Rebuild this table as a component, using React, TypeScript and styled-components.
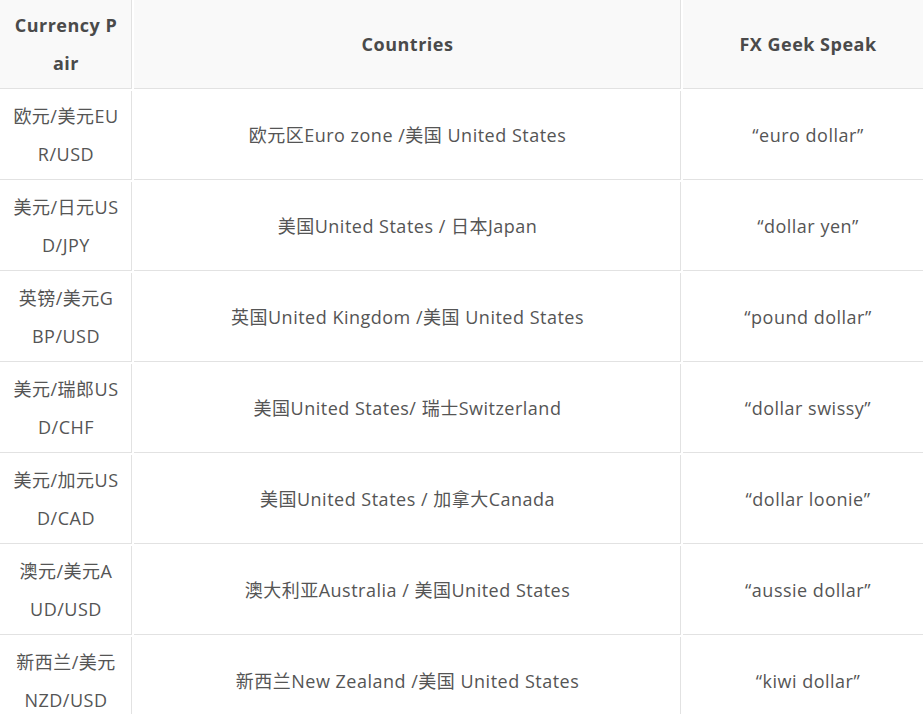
import styled, { createGlobalStyle } from "styled-components";

const rows = [
  { pair: "欧元/美元EUR/USD", countries: "欧元区Euro zone /美国 United States", speak: "“euro dollar”" },
  { pair: "美元/日元USD/JPY", countries: "美国United States / 日本Japan", speak: "“dollar yen”" },
  { pair: "英镑/美元GBP/USD", countries: "英国United Kingdom /美国 United States", speak: "“pound dollar”" },
  { pair: "美元/瑞郎USD/CHF", countries: "美国United States/ 瑞士Switzerland", speak: "“dollar swissy”" },
  { pair: "美元/加元USD/CAD", countries: "美国United States / 加拿大Canada", speak: "“dollar loonie”" },
  { pair: "澳元/美元AUD/USD", countries: "澳大利亚Australia / 美国United States", speak: "“aussie dollar”" },
  { pair: "新西兰/美元NZD/USD", countries: "新西兰New Zealand /美国 United States", speak: "“kiwi dollar”" },
];

function App() {
  return (
    <>
      <GlobalStyle />
      <Page>
        <Table>
          <colgroup>
            <Col $w={132} />
            <Col $w={547} />
            <Col $w={250} />
          </colgroup>
          <thead>
            <tr>
              <Th>Currency Pair</Th>
              <Th>Countries</Th>
              <Th>FX Geek Speak</Th>
            </tr>
          </thead>
          <tbody>
            {rows.map((row) => (
              <tr key={row.pair}>
                <Td>{row.pair}</Td>
                <Td>{row.countries}</Td>
                <Td>{row.speak}</Td>
              </tr>
            ))}
          </tbody>
        </Table>
      </Page>
    </>
  );
}

const GlobalStyle = createGlobalStyle`
  body {
    margin: 0;
    background: #ffffff;
    font-family: "Open Sans", "Noto Sans CJK SC", sans-serif;
  }
`;

const Page = styled.div`
  width: 923px;
  height: 714px;
  overflow: hidden;
`;

const Table = styled.table`
  table-layout: fixed;
  border-collapse: separate;
  border-spacing: 2px;
  margin: -2px 0 0 -2px;
  width: 937px;
  font-size: 18px;
  line-height: 38px;
  letter-spacing: 0.5px;
  color: #555555;
`;

const Col = styled.col<{ $w: number }>`
  width: ${(p) => p.$w}px;
`;

const Th = styled.th`
  background: #f9f9f9;
  padding: 6px 12px 6px 13px;
  border-right: 1px solid #e2e2e2;
  border-bottom: 1px solid #e2e2e2;
  font-weight: 700;
  color: #4a4a4a;
  text-align: center;
  vertical-align: middle;
  word-break: break-all;
`;

const Td = styled.td`
  padding: 6px 12px 6px 13px;
  border-right: 1px solid #e2e2e2;
  border-bottom: 1px solid #e2e2e2;
  text-align: center;
  vertical-align: middle;
  word-break: break-all;
`;

export default App;
